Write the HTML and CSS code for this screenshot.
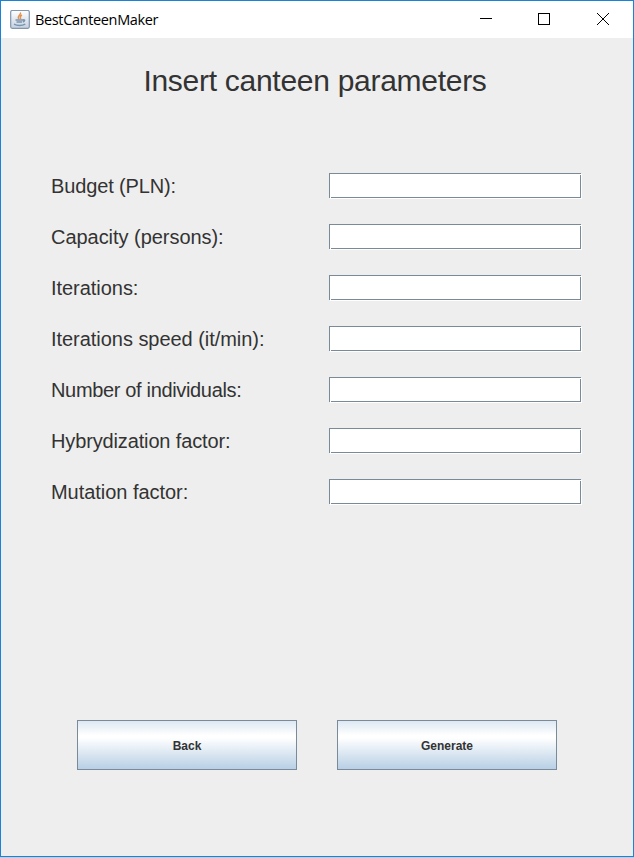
FILE: index.html
```html
<!DOCTYPE html>
<html lang="en"><head><meta charset="utf-8"><title>BestCanteenMaker</title><link rel="stylesheet" href="styles.css"></head>
<body>
<div class="window">
<header class="titlebar">
<svg class="app-icon" width="20" height="20" viewBox="0 0 20 20"><defs><linearGradient id="g" x1="0" y1="0" x2="0" y2="1"><stop offset="0" stop-color="#fff"/><stop offset="1" stop-color="#c5d0df"/></linearGradient></defs><rect x=".7" y=".5" width="18.600" height="17.800" rx="1.500" fill="url(#g)" stroke="#8296ad" stroke-width="1.200"/><path d="M10.300 2.500c1.500 2.500-3.800 3.200-1.500 6.500M12 5c-2.500 1-1.500 2-1.500 4" fill="none" stroke="#e5924f" stroke-width="1.500"/><path d="M5.500 10h7.500M6.500 12h5.500M12.800 10c2.800-.8 2.200 1.200 0 2M4 14.200c3 1.800 8 1.800 11.300 0" fill="none" stroke="#7894b0" stroke-width="1.400"/></svg>
<span class="app-name">BestCanteenMaker</span>
<svg class="controls" width="140" height="37" viewBox="0 0 140 37" fill="none" stroke="#000"><path d="M6 17.500h12"/><rect x="64.500" y="12.500" width="11" height="11"/><path d="M123 12l12 12M135 12l-12 12"/></svg>
</header>
<main class="content">
<h1 class="title">Insert canteen parameters</h1>
<form class="form">
<label class="row"><span class="label snug">Budget (PLN):</span><span class="field-frame"><input class="field" type="text"></span></label>
<label class="row"><span class="label">Capacity (persons):</span><span class="field-frame"><input class="field" type="text"></span></label>
<label class="row"><span class="label">Iterations:</span><span class="field-frame"><input class="field" type="text"></span></label>
<label class="row"><span class="label">Iterations speed (it/min):</span><span class="field-frame"><input class="field" type="text"></span></label>
<label class="row"><span class="label tight">Number of individuals:</span><span class="field-frame"><input class="field" type="text"></span></label>
<label class="row"><span class="label snug">Hybrydization factor:</span><span class="field-frame"><input class="field" type="text"></span></label>
<label class="row"><span class="label">Mutation factor:</span><span class="field-frame"><input class="field" type="text"></span></label>
</form>
<div class="actions"><button class="button">Back</button><button class="button">Generate</button></div>
</main>
</div>
</body></html>
```
FILE: styles.css
```css
* { box-sizing: border-box; }
body { margin: 0; font-family: "Liberation Sans", Arial, sans-serif; color: #333; background: #b4cfe6; }
.window { width: 634px; height: 857px; border: 1px solid #1883d7; background: #eee; }
.titlebar { height: 37px; display: flex; align-items: center; background: #fff; padding-left: 9px; }
.app-name { margin-left: 5px; font: 14.5px "Open Sans", sans-serif; letter-spacing: -0.35px; color: #000; }
.controls { margin-left: auto; margin-right: 19px; }
.title { margin: 0; padding: 25px 4px 0 0; height: 122px; font-size: 30px; line-height: 36px; font-weight: 400; letter-spacing: -0.28px; text-align: center; }
.form { margin: 0 51px 0 50px; display: flex; flex-direction: column; height: 357px; }
.row { height: 51px; display: flex; align-items: center; justify-content: space-between; }
.label { font-size: 20px; line-height: 24px; letter-spacing: -0.04px; }
.snug { letter-spacing: -0.14px; }
.tight { letter-spacing: -0.34px; }
/* Etched border: gray rectangle with a white highlight one pixel down and right */
.field-frame { position: relative; width: 253px; height: 26px; margin-top: 1px; }
.field { display: block; width: 252px; height: 25px; border: 1px solid #7a8a99; border-radius: 0; background: #fff; padding: 0; box-shadow: 1px 1px #fff; }
.field-frame::before, .field-frame::after { content: ""; position: absolute; width: 1px; height: 1px; background: #fff; }
.field-frame::before { left: 1px; top: 24px; }
.field-frame::after { left: 251px; top: 1px; }
.actions { display: flex; gap: 40px; margin: 203px 0 0 76px; }
.button { width: 220px; height: 50px; border: 1px solid #7a8a99; padding: 2px 0 0; font: bold 12px "Liberation Sans", Arial, sans-serif; color: #333; background: linear-gradient(#dde8f3, #fff 30%, #fff 35%, #b8cfe5); }
```
